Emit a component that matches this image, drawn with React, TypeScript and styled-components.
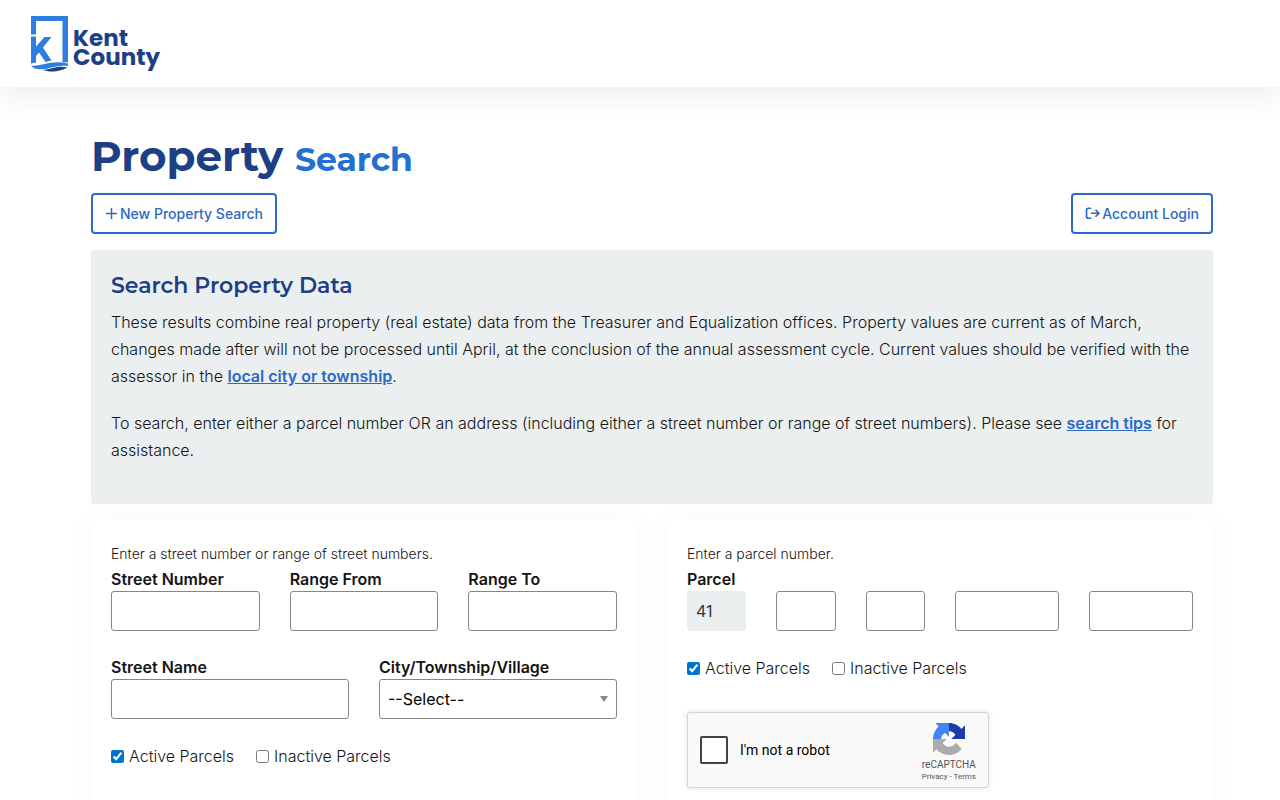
import React from "react";
import styled, { createGlobalStyle } from "styled-components";

const GlobalStyle = createGlobalStyle`
  *, *::before, *::after { box-sizing: border-box; }
  body {
    margin: 0;
    background: #fff;
    color: #141414;
    font-family: Inter, "Liberation Sans", sans-serif;
    font-size: 16px;
    font-weight: 300;
    line-height: 27px;
  }
`;

const navy = "#1d3f85";
const blue = "#2a6ac6";
const heading = `Montserrat, Inter, sans-serif`;

const Header = styled.header`
  display: flex;
  align-items: flex-start;
  height: 87px;
  padding: 15px 30px;
  background: #fff;
  box-shadow: 0 10px 30px rgba(0, 0, 0, 0.07);
`;

const Brand = styled.a`
  display: flex;
  gap: 4px;
  color: ${navy};
  text-decoration: none;
`;

const BrandName = styled.span`
  display: flex;
  flex-direction: column;
  padding-top: 14px;
  font-family: Poppins, Inter, sans-serif;
  font-size: 23px;
  font-weight: 700;
  line-height: 19px;
`;

const Main = styled.main`
  padding: 45px 67px 40px 91px;
`;

const Title = styled.h1`
  margin: 0;
  color: ${navy};
  font-family: ${heading};
  font-size: 42px;
  font-weight: 700;
  line-height: 49px;
`;

const TitleAccent = styled.small`
  color: #2470d2;
  font-size: 33px;
  line-height: 1;
`;

const Actions = styled.div`
  display: flex;
  justify-content: space-between;
  margin: 12px 0 16px;
`;

const OutlineButton = styled.button`
  display: flex;
  align-items: center;
  gap: 2px;
  height: 41px;
  padding: 0 12px;
  border: 2px solid ${blue};
  border-radius: 4px;
  background: #fff;
  color: ${blue};
  font-family: inherit;
  font-size: 14px;
  font-weight: 500;
`;

const Info = styled.section`
  padding: 20px;
  border-radius: 3px;
  background: #ebeff0;
`;

const InfoTitle = styled.h2`
  margin: 0 0 7px;
  color: ${navy};
  font-family: ${heading};
  font-size: 22px;
  font-weight: 600;
  line-height: 32px;
`;

const Paragraph = styled.p`
  margin: 0 0 20px;
`;

const TextLink = styled.a`
  color: ${blue};
  font-weight: 600;
  text-decoration: underline;
`;

const Cards = styled.div`
  display: grid;
  grid-template-columns: 1fr 1fr;
  gap: 30px;
  margin-top: 16px;
`;

const Card = styled.form`
  padding: 20px;
  background: #fff;
  box-shadow: 0 0 30px rgba(0, 0, 0, 0.03);
`;

const Hint = styled.p`
  margin: 0;
  font-size: 14px;
`;

const FieldRow = styled.div<{ $columns: string }>`
  display: grid;
  grid-template-columns: ${(p) => p.$columns};
  gap: 30px;
  margin-bottom: 24px;
`;

const Field = styled.div`
  min-width: 0;
`;

const Label = styled.label`
  display: block;
  font-weight: 600;
  line-height: 24px;
`;

const Group = styled.fieldset`
  margin: 0;
  padding: 0;
  border: 0;
`;

const Legend = styled.legend`
  padding: 0;
  font-weight: 600;
  line-height: 24px;
`;

const TextInput = styled.input`
  display: block;
  width: 100%;
  height: 40px;
  padding: 0 8px;
  border: 1px solid #85878a;
  border-radius: 3px;
  background: #fff;
  color: #1d1d1d;
  font-family: inherit;
  font-size: 16px;

  &:disabled {
    border-color: #ebeff0;
    background: #ebeff0;
    color: #33383f;
    font-weight: 400;
  }
`;

const SelectWrap = styled.div`
  position: relative;

  &::after {
    content: "";
    position: absolute;
    top: 17px;
    right: 9px;
    border: 4px solid transparent;
    border-top: 6px solid #85878a;
    border-bottom: 0;
    pointer-events: none;
  }
`;

const Select = styled.select`
  display: block;
  width: 100%;
  height: 40px;
  padding: 0 8px;
  border: 1px solid #85878a;
  border-radius: 3px;
  background: #fff;
  color: #000;
  font-family: inherit;
  font-size: 16px;
  font-weight: 400;
  appearance: none;
`;

const Checks = styled.div`
  display: flex;
  gap: 22px;
`;

const Check = styled.label`
  display: flex;
  align-items: center;
  gap: 5px;

  input {
    width: 13px;
    height: 13px;
    margin: 0;
    accent-color: #0075d0;
  }
`;

const Captcha = styled.div`
  display: flex;
  justify-content: space-between;
  width: 302px;
  height: 76px;
  margin-top: 30px;
  padding: 0 12px;
  border: 1px solid #d3d3d3;
  border-radius: 3px;
  background: #f9f9f9;
  box-shadow: 0 0 4px 1px rgba(0, 0, 0, 0.08);
  color: #000;
  font-family: Roboto, sans-serif;
  font-size: 14px;
  font-weight: 400;
`;

const RobotCheck = styled.label`
  display: flex;
  align-items: center;
  gap: 12px;

  input {
    width: 28px;
    height: 28px;
    margin: 0;
    border: 2px solid #444;
    border-radius: 2px;
    background: #fff;
    appearance: none;
  }
`;

const CaptchaBrand = styled.div`
  display: flex;
  flex-direction: column;
  align-items: center;
  padding-top: 10px;
  color: #555;
  font-size: 10px;
  line-height: 12px;

  svg { margin-bottom: 4px; }
`;

const Legal = styled.div`
  font-size: 8px;

  a { color: inherit; text-decoration: none; }
`;

function LogoMark() {
  return (
    <svg width="39" height="57" viewBox="0 0 39 57" aria-hidden="true">
      <path d="M1 1H38V47.500C36 47 34.500 47 32.500 47.500V6H6V19.500H1Z" fill="#307de1" />
      <path d="M1 21.500H6V31.500L14.500 22H21.500L13 32.500L21.500 45.500L15.500 47L9 37.500L6 41V47.500L1 48.500Z" fill="#307de1" />
      <path d="M1 50.500C12 52 20 44.500 38 48.500V51C25 49 17 56 7 54C4 53.500 2 52 1 50.500Z" fill="#307de1" />
      <path d="M13 55C21 54.500 27 50 37.500 52.500C32 56 21 58 13 55Z" fill={navy} />
    </svg>
  );
}

function PlusIcon() {
  return (
    <svg width="13" height="13" viewBox="0 0 13 13" fill="none" stroke="currentColor" strokeWidth="1.5" strokeLinecap="round" aria-hidden="true">
      <path d="M6.500 1.500V11.500M1.500 6.500H11.500" />
    </svg>
  );
}

function LoginIcon() {
  return (
    <svg width="15" height="13" viewBox="0 0 15 13" fill="none" stroke="currentColor" strokeWidth="1.700" strokeLinecap="round" strokeLinejoin="round" aria-hidden="true">
      <path d="M5.500 1.250H3.500A2 2 0 0 0 1.500 3.250V9.250A2 2 0 0 0 3.500 11.250H5.500" />
      <path d="M6.500 6.250H14M11 3.250L14 6.250L11 9.250" />
    </svg>
  );
}

function CaptchaLogo() {
  return (
    <svg width="32" height="32" viewBox="0 0 64 64" aria-hidden="true">
      <path fill="#1c3aa9" d="M64 31.955l-.033-1.370V4.687l-7.160 7.160C50.948 4.674 42.033.093 32.050.093c-10.390 0-19.622 4.960-25.458 12.640l11.736 11.860a15.550 15.550 0 0 1 4.754-5.334c2.050-1.600 4.952-2.906 8.968-2.906.485 0 .860.057 1.135.163 4.976.393 9.288 3.140 11.828 7.124l-8.307 8.307L64 31.953" />
      <path fill="#4285f4" d="M31.862.094l-1.370.033H4.594l7.160 7.160C4.580 13.147 0 22.060 0 32.046c0 10.390 4.960 19.622 12.640 25.458L24.500 45.768a15.550 15.550 0 0 1-5.334-4.754c-1.600-2.050-2.906-4.952-2.906-8.968 0-.485.057-.860.163-1.135.393-4.976 3.140-9.288 7.124-11.828l8.307 8.307L31.860.095" />
      <path fill="#ababab" d="M.001 32.045l.033 1.370v25.898l7.160-7.160c5.860 7.173 14.774 11.754 24.760 11.754 10.390 0 19.622-4.960 25.458-12.640l-11.736-11.860a15.550 15.550 0 0 1-4.754 5.334c-2.050 1.600-4.952 2.906-8.968 2.906-.485 0-.860-.057-1.135-.163-4.976-.393-9.288-3.140-11.828-7.124l8.307-8.307L.001 32.047" />
    </svg>
  );
}

function ParcelStatus() {
  return (
    <Checks>
      <Check><input type="checkbox" defaultChecked />Active Parcels</Check>
      <Check><input type="checkbox" />Inactive Parcels</Check>
    </Checks>
  );
}

function LabelledInput({ id, label }: { id: string; label: string }) {
  return (
    <Field>
      <Label htmlFor={id}>{label}</Label>
      <TextInput id={id} type="text" />
    </Field>
  );
}

export default function App() {
  return (
    <>
      <GlobalStyle />
      <Header>
        <Brand href="#">
          <LogoMark />
          <BrandName><span>Kent</span><span>County</span></BrandName>
        </Brand>
      </Header>
      <Main>
        <Title>Property <TitleAccent>Search</TitleAccent></Title>
        <Actions>
          <OutlineButton type="button"><PlusIcon />New Property Search</OutlineButton>
          <OutlineButton type="button"><LoginIcon />Account Login</OutlineButton>
        </Actions>
        <Info>
          <InfoTitle>Search Property Data</InfoTitle>
          <Paragraph>
            These results combine real property (real estate) data from the Treasurer and Equalization offices. Property values are current as of March, changes made after will not be processed until April, at the conclusion of the annual assessment cycle. Current values should be verified with the assessor in the <TextLink href="#">local city or township</TextLink>.
          </Paragraph>
          <Paragraph>
            To search, enter either a parcel number OR an address (including either a street number or range of street numbers). Please see <TextLink href="#">search tips</TextLink> for assistance.
          </Paragraph>
        </Info>
        <Cards>
          <Card>
            <Hint>Enter a street number or range of street numbers.</Hint>
            <FieldRow $columns="repeat(3, 1fr)">
              <LabelledInput id="street-number" label="Street Number" />
              <LabelledInput id="range-from" label="Range From" />
              <LabelledInput id="range-to" label="Range To" />
            </FieldRow>
            <FieldRow $columns="repeat(2, 1fr)">
              <LabelledInput id="street-name" label="Street Name" />
              <Field>
                <Label htmlFor="city">City/Township/Village</Label>
                <SelectWrap>
                  <Select id="city"><option>--Select--</option></Select>
                </SelectWrap>
              </Field>
            </FieldRow>
            <ParcelStatus />
          </Card>
          <Card>
            <Hint>Enter a parcel number.</Hint>
            <Group>
              <Legend>Parcel</Legend>
              <FieldRow $columns="89fr 89fr 89fr 156fr 156fr">
                <TextInput aria-label="County code" defaultValue="41" disabled />
                <TextInput aria-label="Section" />
                <TextInput aria-label="Quarter" />
                <TextInput aria-label="Block" />
                <TextInput aria-label="Lot" />
              </FieldRow>
            </Group>
            <ParcelStatus />
            <Captcha>
              <RobotCheck><input type="checkbox" />I'm not a robot</RobotCheck>
              <CaptchaBrand>
                <CaptchaLogo />
                <span>reCAPTCHA</span>
                <Legal><a href="#">Privacy</a> - <a href="#">Terms</a></Legal>
              </CaptchaBrand>
            </Captcha>
          </Card>
        </Cards>
      </Main>
    </>
  );
}
